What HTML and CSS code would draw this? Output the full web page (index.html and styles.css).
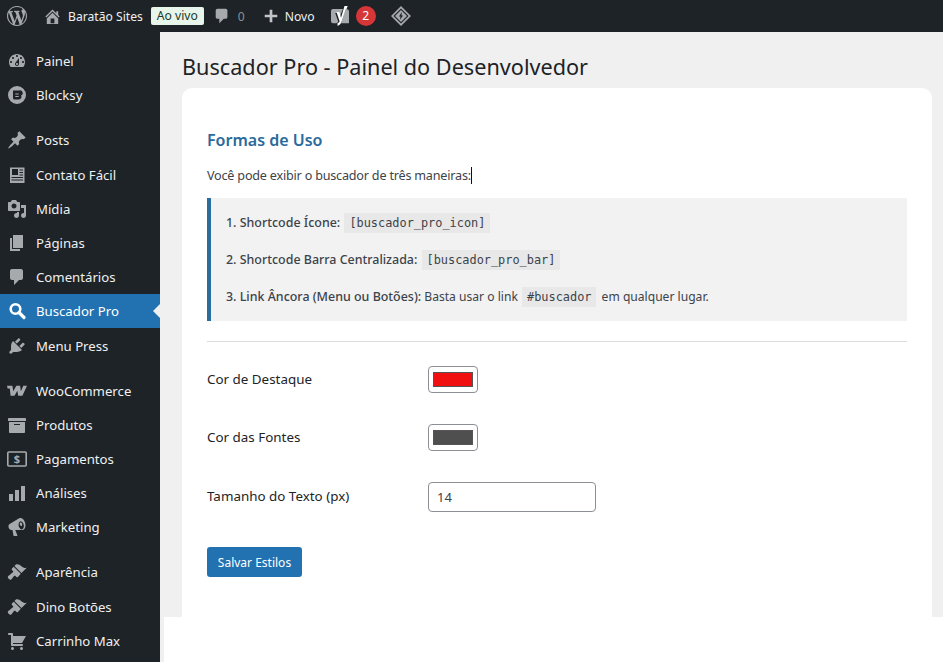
FILE: index.html
```html
<!DOCTYPE html>
<html lang="pt-BR">
<head>
<meta charset="utf-8">
<title>Buscador Pro</title>
<link rel="stylesheet" href="styles.css">
</head>
<body>
<header class="topbar">
  <svg class="ti wp" viewBox="0 0 20 20"><path d="M20 10c0-5.51-4.49-10-10-10C4.48 0 0 4.49 0 10c0 5.52 4.48 10 10 10 5.51 0 10-4.48 10-10zM7.78 15.37L4.37 6.22c.55-.02 1.17-.08 1.17-.08.5-.06.44-1.13-.06-1.11 0 0-1.45.11-2.37.11-.18 0-.37 0-.58-.01C4.12 2.69 6.87 1.11 10 1.11c2.33 0 4.45.87 6.05 2.34-.68-.11-1.65.39-1.65 1.58 0 .74.45 1.36.9 2.1.35.61.55 1.36.55 2.46 0 1.49-1.4 5-1.4 5l-3.03-8.37c.54-.02.82-.17.82-.17.5-.05.44-1.25-.06-1.22 0 0-1.44.12-2.38.12-.87 0-2.33-.12-2.33-.12-.5-.03-.56 1.2-.06 1.22l.92.08 1.26 3.41zM17.41 10c.24-.64.74-1.87.43-4.25.7 1.29 1.05 2.71 1.05 4.25 0 3.29-1.73 6.24-4.4 7.78.97-2.59 1.94-5.2 2.92-7.78zM6.1 18.09C3.12 16.65 1.11 13.53 1.11 10c0-1.3.23-2.48.72-3.59C3.25 10.3 4.67 14.2 6.1 18.09zm4.03-6.63l2.58 6.98c-.86.29-1.76.45-2.71.45-.79 0-1.57-.11-2.29-.33.81-2.38 1.62-4.74 2.42-7.1z"/></svg>
  <svg class="ti home" viewBox="0 0 20 20"><path d="M16 8.5l1.53 1.53-1.06 1.06L10 4.62l-6.47 6.47-1.06-1.06L10 2.5l4 4v-2h2v4zm-6-2.46l6 5.99V18H4v-5.97zM12 17v-5H8v5h4z"/></svg>
  <span class="site">Baratão Sites</span>
  <span class="live">Ao vivo</span>
  <svg class="ti bubble" viewBox="0 0 20 20"><path d="M5 2h9c1.1 0 2 .9 2 2v7c0 1.1-.9 2-2 2h-2l-5 5v-5H5c-1.1 0-2-.9-2-2V4c0-1.1.9-2 2-2z"/></svg>
  <span class="count">0</span>
  <svg class="ti plus" viewBox="0 0 20 20"><path d="M17 8.5v3h-5.5V17h-3v-5.500H3v-3h5.500V3h3v5.500z"/></svg>
  <span class="new">Novo</span>
  <svg class="ti yoast" viewBox="0 0 20 20"><path d="M3 3h10l-1.500 3.500L9.500 12 8 7H5.200l3 8.500c-.4 1-1 1.500-2.200 1.800H3a2 2 0 0 1-2-2V5a2 2 0 0 1 2-2z"/><path d="M14.500 0h3.200l-6 15.500c-.8 2.200-2 3.700-4.200 4.200v-2.400c1.100-.4 1.700-1 2.100-2.100L6.500 6h2.800l1.700 5.800z" fill="#fff"/><path d="M15.500 3.300H17a2 2 0 0 1 2 2v12h-8z"/></svg>
  <span class="alert">2</span>
  <svg class="ti diamond" viewBox="0 0 20 20"><path fill-rule="evenodd" d="M10 0l10 10-10 10L0 10zM10 2.400L2.400 10l7.600 7.600 7.600-7.600z"/><path d="M10 4l6 6-6 6-6-6z"/><path d="M10.800 6L8 10.500h1.500l-.6 3.500L12 9.500h-1.500z" fill="#1d2327"/></svg>
</header>

<div class="layout">
  <nav class="sidebar">
    <a class="item first"><svg class="mi" viewBox="0 0 20 20"><path d="M3.760 16h12.480c1.100-1.370 1.760-3.110 1.760-5 0-4.420-3.580-8-8-8s-8 3.580-8 8c0 1.890.660 3.630 1.760 5zM10 4c.550 0 1 .450 1 1s-.450 1-1 1-1-.450-1-1 .450-1 1-1zM6 6c.550 0 1 .450 1 1s-.450 1-1 1-1-.450-1-1 .450-1 1-1zm8 0c.550 0 1 .450 1 1s-.450 1-1 1-1-.450-1-1 .450-1 1-1zm-5.370 5.550L12 7v6c0 1.100-.900 2-2 2s-2-.900-2-2c0-.570.240-1.080.630-1.450zM4 10c.550 0 1 .450 1 1s-.450 1-1 1-1-.450-1-1 .450-1 1-1zm12 0c.550 0 1 .450 1 1s-.450 1-1 1-1-.450-1-1 .450-1 1-1zm-5 3c0-.550-.450-1-1-1s-1 .450-1 1 .450 1 1 1 1-.450 1-1z"/></svg>Painel</a>
    <a class="item"><svg class="mi" viewBox="0 0 20 20"><path fill-rule="evenodd" d="M10 1a9 9 0 1 1 0 18 9 9 0 0 1 0-18zM6 5.500V13a1.500 1.500 0 0 0 1.500 1.500H12a2.500 2.500 0 0 0 2-4 2.500 2.500 0 0 0-2-5zM8.300 8.500h3.400v1.100H8.300zM8.300 11h3.400v1.100H8.300z"/></svg>Blocksy</a>
    <div class="sep"></div>
    <a class="item"><svg class="mi" viewBox="0 0 20 20"><path d="M10.440 3.020l1.820-1.820 6.360 6.350-1.830 1.820c-1.050-.680-2.480-.570-3.410.360l-.750.750c-.920.930-1.040 2.350-.350 3.410l-1.830 1.820-2.410-2.410-2.800 2.790c-.420.420-3.380 2.710-3.800 2.290s1.860-3.390 2.280-3.810l2.790-2.790L4.100 9.360l1.830-1.820c1.050.690 2.480.570 3.400-.360l.750-.750c.930-.920 1.050-2.350.360-3.410z"/></svg>Posts</a>
    <a class="item"><svg class="mi" viewBox="0 0 20 20"><path fill-rule="evenodd" d="M3 2.500h14.500v15.500H3zM5 4v6h6V4zM12.500 4.500v1H16v-1zM12.500 7v1H16V7zM12.500 9.500v1H16v-1zM4.500 12v1H16v-1zM4.500 14.500v1H16v-1z"/><circle cx="8" cy="5.800" r="1.300" fill="#1d2327"/><path d="M5.500 9.600c0-1.500 1.100-2.200 2.500-2.200s2.500.7 2.500 2.200z" fill="#1d2327"/></svg>Contato Fácil</a>
    <a class="item"><svg class="mi" viewBox="0 0 20 20"><path d="M13 11V4c0-.550-.450-1-1-1h-1.670L9 1H5L3.670 3H2c-.550 0-1 .450-1 1v7c0 .550.450 1 1 1h10c.550 0 1-.450 1-1zM7 4.500c1.380 0 2.500 1.120 2.500 2.500S8.380 9.500 7 9.500 4.500 8.380 4.500 7 5.620 4.500 7 4.500zM14 6h5v10.500c0 1.380-1.120 2.500-2.500 2.500S14 17.880 14 16.500s1.120-2.500 2.500-2.500c.170 0 .340.020.500.050V9h-3V6zm-4 8.050V13h2v3.500c0 1.380-1.120 2.500-2.500 2.500S7 17.880 7 16.500 8.120 14 9.500 14c.170 0 .340.020.500.050z"/></svg>Mídia</a>
    <a class="item"><svg class="mi" viewBox="0 0 20 20"><path d="M6 15V2h10v13H6zm-1 1h8v2H3V5h2v11z"/></svg>Páginas</a>
    <a class="item"><svg class="mi" viewBox="0 0 20 20"><path d="M5 2h9c1.100 0 2 .900 2 2v7c0 1.100-.900 2-2 2h-2l-5 5v-5H5c-1.100 0-2-.900-2-2V4c0-1.100.900-2 2-2z"/></svg>Comentários</a>
    <a class="item current"><svg class="mi" viewBox="0 0 20 20"><circle cx="8.500" cy="8" r="4.800" fill="none" stroke="currentColor" stroke-width="2.600"/><path d="M12 11.500l5 5" stroke="currentColor" stroke-width="3.200" stroke-linecap="round"/></svg>Buscador Pro</a>
    <a class="item"><svg class="mi" viewBox="0 0 20 20"><path d="M13.110 4.360L9.870 7.600 8 5.730l3.240-3.240c.350-.340 1.050-.200 1.560.320.520.510.660 1.210.310 1.550zm-8 1.770l.910-1.120 9.010 9.010-1.190.840c-.710.710-2.630 1.160-3.820 1.160H6.140L4.900 17.260c-.590.590-1.540.590-2.120 0-.590-.580-.590-1.530 0-2.120l1.240-1.240v-3.880c0-1.130.400-3.190 1.090-3.890zm7.260 3.970l3.240-3.240c.340-.350 1.040-.210 1.550.310.520.510.660 1.210.310 1.550l-3.240 3.250z"/></svg>Menu Press</a>
    <div class="sep"></div>
    <a class="item"><svg class="mi" viewBox="0 0 20 20"><path d="M0 4.800h5.400l.9 5.400 3-5.400h3.800l.8 5.400 2.400-5.400H20l-4.600 10h-4.200l-.9-5-2.800 5H3.600L2.800 7.500H.6z"/></svg>WooCommerce</a>
    <a class="item"><svg class="mi" viewBox="0 0 20 20"><path d="M19 4v2H1V4c0-.550.450-1 1-1h16c.550 0 1 .450 1 1zM2 7h16v10c0 .550-.450 1-1 1H3c-.550 0-1-.450-1-1V7zm11 3V9H7v1h6z"/></svg>Produtos</a>
    <a class="item"><svg class="mi" viewBox="0 0 20 20"><rect x=".8" y="3" width="18.400" height="14" rx="1" fill="none" stroke="currentColor" stroke-width="1.600"/><text x="10" y="14.300" text-anchor="middle" class="dollar">$</text></svg>Pagamentos</a>
    <a class="item"><svg class="mi" viewBox="0 0 20 20"><path d="M2 11h4v7H2zM8 7h4v11H8zM14 3h4v15h-4z"/></svg>Análises</a>
    <a class="item"><svg class="mi" viewBox="0 0 20 20"><path d="M18.150 5.940c.460 1.620.380 3.220-.020 4.480-.420 1.280-1.260 2.180-2.300 2.480-.160.060-.260.060-.400.060-.060.020-.120.020-.180.020-.060.020-.140.020-.220.020h-6.800l2.220 5.500c.020.140-.060.260-.140.340-.080.100-.240.160-.340.160H6.950c-.100 0-.260-.060-.340-.160-.080-.080-.160-.200-.140-.340l-1-5.500H4.250l-.020-.020c-.500.060-1.080-.180-1.540-.620s-.880-1.080-1.060-1.880c-.240-.800-.200-1.560-.020-2.200.180-.620.580-1.080 1.060-1.300l.020-.020 9-5.400c.100-.060.180-.100.240-.160.060-.040.140-.080.240-.120.160-.080.280-.120.500-.180 1.040-.300 2.240.100 3.220.980s1.760 2.200 2.260 3.820zm-3 6.380c.720-.200 1.220-.940 1.500-2 .300-.840.300-1.780.020-2.820-.320-.960-.840-1.800-1.520-2.380-.680-.600-1.240-.920-1.980-.700-.720.240-1.120 1-1.400 1.960-.300.940-.300 1.940 0 2.900.280 1 .800 1.800 1.500 2.400.660.580 1.160.840 1.880.640zm-.700-3.300c-.360.100-.640-.080-.940-.340-.300-.280-.540-.660-.660-1.100-.140-.460-.140-.920-.020-1.340.120-.440.320-.700.680-.800.360-.120.640.080.940.340.300.280.540.660.680 1.120.120.440.120.900 0 1.320-.120.440-.320.680-.680.800z"/></svg>Marketing</a>
    <div class="sep"></div>
    <a class="item"><svg class="mi" viewBox="0 0 20 20"><path d="M14.480 11.060L7.410 3.990l1.500-1.500c.500-.560 2.300-.470 3.510.320 1.210.800 1.430 1.280 2.910 2.100 1.180.640 2.450 1.260 4.450.850zm-.710.710L6.700 4.700 4.930 6.470c-.390.390-.390 1.020 0 1.410l1.060 1.060c.390.390.390 1.030 0 1.420-.600.600-1.430 1.110-2.210 1.690-.350.260-.700.530-1.010.840C1.430 13.230.280 15 1 16.120c.710 1.110 2.260 2.370 3.510 1.120.310-.310.580-.660.840-1.010.580-.780 1.090-1.610 1.690-2.210.390-.390 1.020-.390 1.410 0l1.060 1.060c.390.390 1.020.390 1.410 0z"/></svg>Aparência</a>
    <a class="item"><svg class="mi" viewBox="0 0 20 20"><path d="M14.480 11.060L7.410 3.990l1.500-1.500c.500-.560 2.300-.470 3.510.320 1.210.800 1.430 1.280 2.910 2.100 1.180.640 2.450 1.260 4.450.850zm-.710.710L6.700 4.700 4.930 6.470c-.390.390-.390 1.020 0 1.410l1.060 1.060c.390.390.390 1.030 0 1.420-.600.600-1.430 1.110-2.210 1.690-.350.260-.700.530-1.010.84C1.430 13.230.280 15 1 16.120c.710 1.110 2.260 2.370 3.510 1.120.310-.310.580-.660.840-1.010.580-.780 1.090-1.610 1.690-2.210.390-.390 1.020-.390 1.410 0l1.060 1.060c.390.390 1.020.390 1.410 0z"/></svg>Dino Botões</a>
    <a class="item"><svg class="mi" viewBox="0 0 20 20"><path d="M6 13h9c.550 0 1 .450 1 1s-.450 1-1 1H5c-.550 0-1-.450-1-1V4H2c-.550 0-1-.450-1-1s.450-1 1-1h3c.550 0 1 .450 1 1v2h13l-4 7H6v1zm-.500 3c.830 0 1.500.670 1.500 1.500S6.330 19 5.500 19 4 18.330 4 17.500 4.670 16 5.500 16zm9 0c.830 0 1.500.670 1.500 1.500s-.670 1.500-1.500 1.500-1.500-.670-1.500-1.500.670-1.500 1.500-1.500z"/></svg>Carrinho Max</a>
  </nav>

  <div class="main">
    <main class="wrap">
      <h1 class="title">Buscador Pro - Painel do Desenvolvedor</h1>
      <section class="card">
        <h2 class="heading">Formas de Uso</h2>
        <p class="intro">Você pode exibir o buscador de três maneiras:<span class="caret"></span></p>
        <div class="notice">
          <p class="line"><span class="strong">1. Shortcode Ícone:</span> <code class="code">[buscador_pro_icon]</code></p>
          <p class="line"><span class="strong">2. Shortcode Barra Centralizada:</span> <code class="code">[buscador_pro_bar]</code></p>
          <p class="line"><span class="strong">3. Link Âncora (Menu ou Botões):</span> Basta usar o link <code class="code">#buscador</code> em qualquer lugar.</p>
        </div>
        <hr class="rule">
        <div class="row first-row"><label class="label">Cor de Destaque</label><span class="swatch"><span class="fill red"></span></span></div>
        <div class="row second-row"><label class="label">Cor das Fontes</label><span class="swatch"><span class="fill gray"></span></span></div>
        <div class="row third-row"><label class="label">Tamanho do Texto (px)</label><input class="field" type="text" value="14"></div>
        <button class="save" type="button">Salvar Estilos</button>
      </section>
    </main>
    <div class="foot"></div>
  </div>
</div>
</body>
</html>
```
FILE: styles.css
```css
* { box-sizing: border-box; }
html, body { margin: 0; height: 662px; overflow: hidden; }
body { font-family: "Noto Sans", sans-serif; font-size: 13px; background: #fff; color: #2c3338; }

.topbar { height: 32px; background: #1d2327; color: #f0f0f1; display: flex; align-items: center; font-size: 12.150px; }
.ti { fill: #a7aaad; flex: none; }
.wp { width: 20px; height: 20px; margin-left: 7px; }
.home { width: 19px; height: 19px; margin-left: 16px; }
.site { margin-left: 6px; }
.live { margin-left: 8px; width: 53px; height: 18px; line-height: 18px; text-align: center; background: #e7f5ea; color: #1a3a2a; border-radius: 2px; }
.bubble { width: 18px; height: 18px; margin-left: 9px; }
.count { margin-left: 7px; color: #8c8f94; }
.plus { width: 18px; height: 18px; margin-left: 17px; fill: #c3c4c7; }
.new { margin-left: 5px; }
.yoast { width: 20px; height: 20px; margin-left: 15px; }
.alert { width: 20px; height: 20px; margin-left: 6px; border-radius: 50%; background: #d63638; color: #fff; text-align: center; line-height: 20px; }
.diamond { width: 20px; height: 20px; margin-left: 15px; }

.layout { display: flex; height: 630px; }
.sidebar { width: 160px; flex: none; background: #1d2327; padding-top: 12.150px; overflow: hidden; }
.item { height: 34.200px; display: flex; align-items: center; padding-left: 7px; color: #f0f0f1; font-size: 13.200px; position: relative; }
.mi { width: 20px; height: 20px; margin-right: 9px; fill: #a7aaad; color: #a7aaad; flex: none; }
.dollar { font: 700 11px "Noto Sans", sans-serif; fill: #a7aaad; }
.sep { height: 10.850px; }
.current { background: #2271b1; color: #fff; }
.current .mi { color: #fff; fill: #fff; }
.current::after { content: ""; position: absolute; right: 0; top: 10px; border: 7px solid transparent; border-right-color: #f0f0f1; border-left-width: 0; }

.main { flex: 1; min-width: 0; display: flex; flex-direction: column; }
.wrap { height: 585px; flex: none; background: #f0f0f0; padding: 0 11px 0 22px; overflow: hidden; }
.foot { flex: 1; background: #fff; border-left: 4px solid #f0f0f0; }

.title { margin: 0; padding-top: 19px; height: 56px; font-size: 21.650px; line-height: 32px; font-weight: 400; color: #1d2327; }
.card { background: #fff; border-radius: 10px 10px 0 0; padding: 40px 25px 0; height: 600px; }
.heading { margin: 0; font-size: 16px; line-height: 24px; font-weight: 600; color: #2a6a9c; }
.intro { margin: 12px 0 0; font-size: 12.600px; letter-spacing: -.2px; line-height: 24px; color: #3c434a; }
.caret { display: inline-block; width: 1px; height: 17px; background: #111; vertical-align: -4px; }
.notice { margin-top: 10px; height: 123px; background: #f2f2f2; border-left: 4px solid #2a6c9b; padding: 12px 15px 0; }
.line { margin: 0 0 11px; height: 26px; line-height: 26px; font-size: 12.100px; color: #3c434a; }
.strong { font-size: 12.450px; font-weight: 500; }
.code { font-family: "DejaVu Sans Mono", monospace; font-size: 11.900px; background: #e8e8e8; padding: 3px 5px; margin: 0 2px 0 1px; color: #3c434a; }
.rule { margin: 20px 0 0; border: 0; border-top: 1px solid #dcdcde; }
.row { display: flex; align-items: center; height: 30px; }
.first-row { margin-top: 22.500px; }
.second-row { margin-top: 28px; }
.third-row { margin-top: 29px; }
.label { width: 221px; padding-bottom: 1px; font-size: 13.400px; color: #1d2327; }
.swatch { width: 50px; height: 27px; border: 1px solid #8c8f94; border-radius: 4px; background: #fff; padding: 5px 4px; display: flex; }
.fill { flex: 1; border: 1px solid #555; }
.red { background: #f01010; }
.gray { background: #4f4f4f; }
.field { width: 168px; height: 30px; border: 1px solid #8c8f94; border-radius: 4px; padding: 0 8px; font: 13px "Noto Sans", sans-serif; color: #3c434a; background: #fff; }
.save { display: block; margin-top: 35px; width: 95px; height: 30px; border: 0; border-radius: 3px; background: #2271b1; color: #fff; font: 12px "Noto Sans", sans-serif; padding: 1px 0 0; }
```
